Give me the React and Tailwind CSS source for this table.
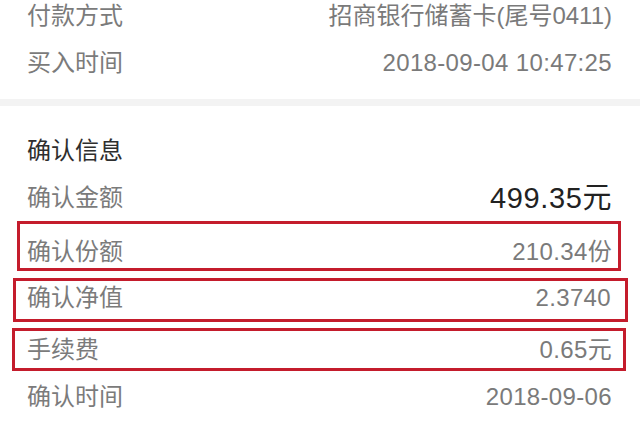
const font = { fontFamily: '"Liberation Sans", "Noto Sans CJK SC", sans-serif' }

const Row = ({ label, value, className = '', valueClass = 'text-[24px] tracking-[0.35px] text-[#7a7a7a]' }) => (
    <div className={`flex items-center justify-between ${className}`}>
        <span className="text-[24px] leading-none text-[#7b7b7b]">{label}</span>
        <span className={`leading-none ${valueClass}`}>{value}</span>
    </div>
)

const App = () => {
    return (
        <div className="w-[640px] h-[428px] overflow-hidden bg-white" style={font}>
            {/* top part, scrolled a little */}
            <div className="-mt-[8px]">
                <Row
                    label="付款方式"
                    value="招商银行储蓄卡(尾号0411)"
                    className="h-[47px] pl-[27px] pr-[28px]"
                    valueClass="text-[24px] text-[#7a7a7a]"
                />
                <Row label="买入时间" value="2018-09-04 10:47:25" className="h-[47px] pl-[27px] pr-[28px]" />
            </div>

            <div className="mt-[13px] h-[7px] bg-[#f3f3f3]"></div>

            <div className="mt-[21px] h-[48px] flex items-center pl-[27px]">
                <span className="text-[24px] leading-none text-[#2e2e2e]">确认信息</span>
            </div>

            <Row
                label="确认金额"
                value="499.35元"
                className="h-[46px] pl-[27px] pr-[28px]"
                valueClass="text-[29px] tracking-[0.6px] text-[#222]"
            />

            <div className="ml-[17px] mr-[19px] h-[50px] border-[3px] border-[#c41c2c] pt-[12px] pl-[7px] pr-[6px]">
                <Row label="确认份额" value="210.34份" className="h-full" />
            </div>

            <div className="mt-[7px] ml-[13px] mr-[12px] h-[44px] border-[3px] border-[#c41c2c] pb-[4px] pl-[11px] pr-[14px]">
                <Row label="确认净值" value="2.3740" className="h-full" />
            </div>

            <div className="mt-[6px] ml-[12px] mr-[14px] h-[43px] border-[3px] border-[#c41c2c] pl-[12px] pr-[11px]">
                <Row label="手续费" value="0.65元" className="h-full" />
            </div>

            <Row label="确认时间" value="2018-09-06" className="mt-[3px] h-[46px] pl-[27px] pr-[28px]" />
        </div>
    )
}

export default App
